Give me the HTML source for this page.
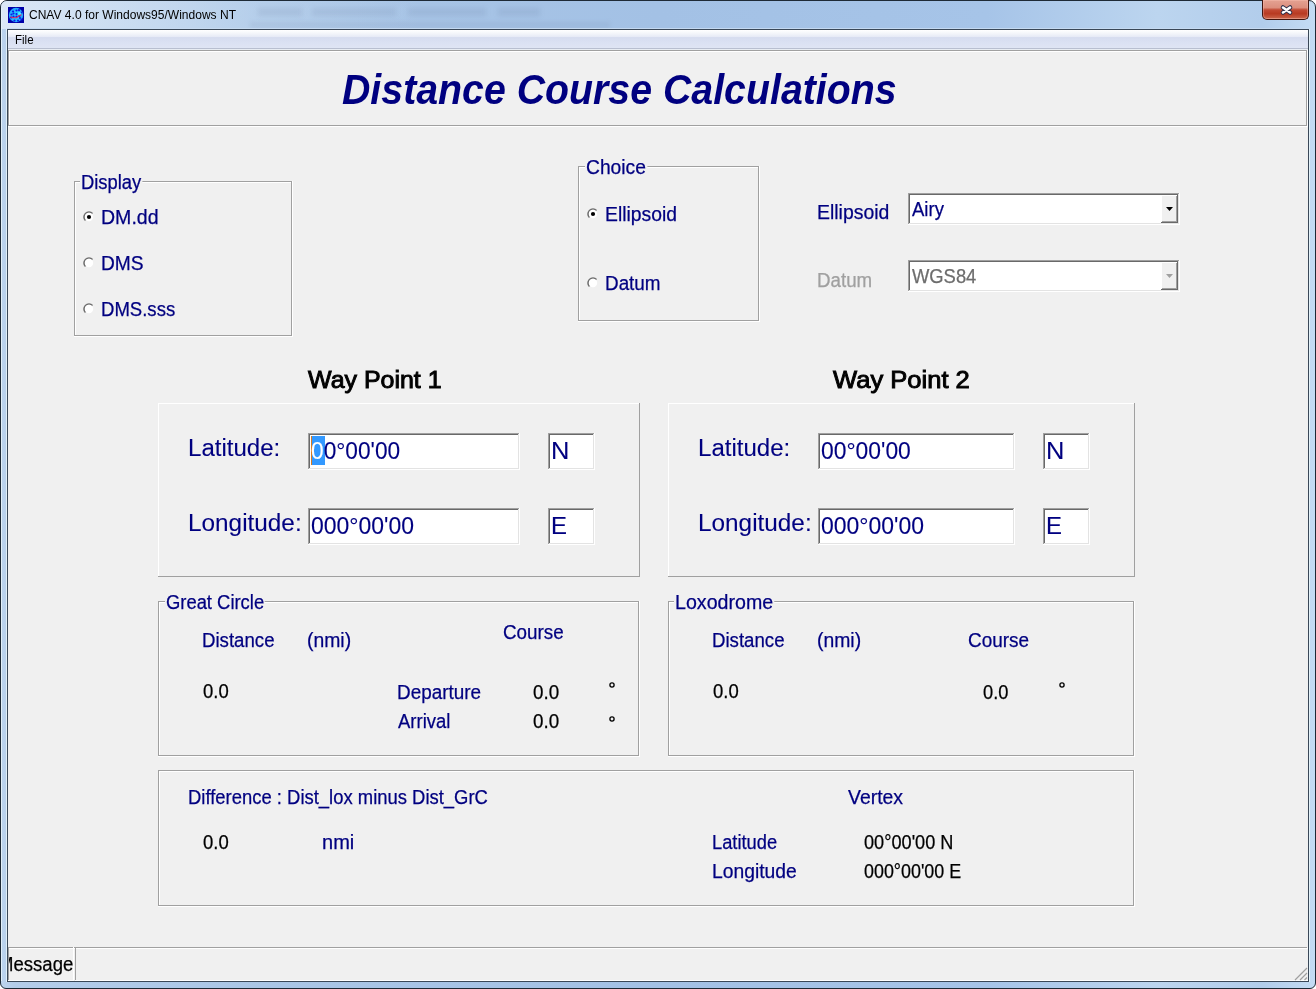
<!DOCTYPE html><html><head><meta charset="utf-8"><style>html,body{margin:0;padding:0;}body{width:1316px;height:989px;overflow:hidden;position:relative;background:#ffffff;font-family:"Liberation Sans",sans-serif;}.t{position:absolute;white-space:nowrap;}</style></head><body>
<div style="position:absolute;left:0;top:0;width:1314px;height:987px;border:1px solid #1e2a36;border-radius:7px 7px 6px 6px;background:linear-gradient(90deg,#bcd4ee 0%,#b4cdea 1%,#aac6e6 20%,#a3c1e5 50%,#a6c4e8 75%,#bcd5ef 88%,#b2cdeb 96%,#c4dcf4 100%);"></div>
<div style="position:absolute;left:1px;top:1px;width:420px;height:28px;border-radius:6px 0 0 0;background:linear-gradient(90deg,rgba(225,236,248,0.85),rgba(200,220,242,0.4) 60%,rgba(160,192,230,0));"></div>
<div style="position:absolute;left:258px;top:8px;width:44px;height:8px;background:rgba(70,95,130,0.11);filter:blur(2.5px);"></div>
<div style="position:absolute;left:312px;top:8px;width:84px;height:8px;background:rgba(70,95,130,0.11);filter:blur(2.5px);"></div>
<div style="position:absolute;left:408px;top:8px;width:78px;height:8px;background:rgba(70,95,130,0.11);filter:blur(2.5px);"></div>
<div style="position:absolute;left:498px;top:8px;width:42px;height:8px;background:rgba(70,95,130,0.11);filter:blur(2.5px);"></div>
<div style="position:absolute;left:250px;top:22px;width:360px;height:6px;background:rgba(90,110,140,0.10);filter:blur(2px);"></div>
<div style="position:absolute;left:1px;top:8px;width:1px;height:973px;background:rgba(230,243,250,0.9)"></div>
<div style="position:absolute;left:6px;top:29px;width:1px;height:953px;background:rgba(230,243,250,0.9)"></div>
<div style="position:absolute;left:1309px;top:29px;width:1px;height:953px;background:rgba(230,243,250,0.9)"></div>
<div style="position:absolute;left:7px;top:28px;width:1302px;height:1px;background:rgba(200,220,242,0.9)"></div>
<div style="position:absolute;left:7px;top:29px;width:1302px;height:953px;background:#3a4858"></div>
<div style="position:absolute;left:8px;top:30px;width:1300px;height:951px;background:#f0f0f0"></div>
<div style="position:absolute;left:8px;top:30px;width:1300px;height:18px;background:linear-gradient(180deg,#ffffff 0%,#f3f5fa 20%,#e6eaf6 38%,#d6dcef 42%,#d9e0f2 60%,#dfe5f4 100%)"></div>
<div style="position:absolute;left:8px;top:48px;width:1300px;height:1px;background:#b8bfd0"></div>
<div style="position:absolute;left:8px;top:49px;width:1300px;height:1px;background:#e8edf3"></div>
<div class="t" style="left:14.75px;top:34.29px;font-size:12.06px;line-height:12.06px;color:#000;font-weight:normal;font-style:normal;transform:scaleX(0.9545);transform-origin:0 0;">File</div>
<div class="t" style="left:29.00px;top:9.04px;font-size:12.35px;line-height:12.35px;color:#000;font-weight:normal;font-style:normal;transform:scaleX(0.9745);transform-origin:0 0;">CNAV 4.0 for Windows95/Windows NT</div>
<svg style="position:absolute;left:8px;top:7px" width="16" height="16" viewBox="0 0 16 16"><rect width="16" height="16" fill="#0000a8"/><circle cx="8" cy="8" r="7.2" fill="#22aaff"/><circle cx="8" cy="8.5" r="5.5" fill="#28c4ff" opacity="0.7"/><circle cx="5" cy="4.5" r="1.1" fill="#0a1ee6"/><circle cx="8.5" cy="3.5" r="1.1" fill="#0a1ee6"/><circle cx="11" cy="3.2" r="1.1" fill="#0a1ee6"/><circle cx="3.5" cy="7.5" r="1.1" fill="#0a1ee6"/><circle cx="5.5" cy="6.5" r="1.1" fill="#0a1ee6"/><circle cx="8.5" cy="7" r="1.1" fill="#0a1ee6"/><circle cx="5.5" cy="9.5" r="1.1" fill="#0a1ee6"/><circle cx="8.5" cy="9.5" r="1.1" fill="#0a1ee6"/><circle cx="13.5" cy="5.5" r="1.1" fill="#0a1ee6"/><circle cx="12" cy="11" r="1.1" fill="#0a1ee6"/><circle cx="13.5" cy="12.5" r="1.1" fill="#0a1ee6"/><circle cx="10" cy="13.5" r="1.1" fill="#0a1ee6"/><circle cx="6.5" cy="13.5" r="1.1" fill="#0a1ee6"/><circle cx="3.2" cy="10.5" r="1.1" fill="#0a1ee6"/><circle cx="11.5" cy="9" r="1.1" fill="#0a1ee6"/><circle cx="11.5" cy="6.5" r="1.6" fill="#40f4ff"/><path d="M2.5 9.8 L4.5 10.8 L8.5 10.8 L11 8.8 L13.5 7.8" stroke="#e8205a" stroke-width="1.1" fill="none"/></svg>
<div style="position:absolute;left:1262px;top:0px;width:45px;height:19px;border:1px solid #40140e;border-top:none;border-radius:0 0 5px 5px;box-shadow:inset 0 0 0 1px rgba(255,200,190,0.35);background:linear-gradient(180deg,#e4a292 0%,#dc8f7e 40%,#c24a34 52%,#b83a22 72%,#c65a40 92%,#d88068 100%);"></div>
<svg style="position:absolute;left:1279px;top:3px" width="15" height="14" viewBox="0 0 15 14"><path d="M4 4.5 L11 9.5 M11 4.5 L4 9.5" stroke="#30304a" stroke-width="4.6" stroke-linecap="round"/><path d="M4 4.5 L11 9.5 M11 4.5 L4 9.5" stroke="#ffffff" stroke-width="2.6" stroke-linecap="round"/></svg>
<div style="position:absolute;left:9px;top:51px;width:1299px;height:1px;background:#fff"></div>
<div style="position:absolute;left:9px;top:51px;width:1px;height:76px;background:#fff"></div>
<div style="position:absolute;left:8px;top:126px;width:1300px;height:1px;background:#fff"></div>
<div style="position:absolute;left:1307px;top:50px;width:1px;height:77px;background:#fff"></div>
<div style="position:absolute;left:8px;top:50px;width:1299px;height:1px;background:#a0a0a0"></div>
<div style="position:absolute;left:8px;top:50px;width:1px;height:76px;background:#a0a0a0"></div>
<div style="position:absolute;left:8px;top:125px;width:1299px;height:1px;background:#a0a0a0"></div>
<div style="position:absolute;left:1306px;top:50px;width:1px;height:76px;background:#a0a0a0"></div>
<div class="t" style="left:341.51px;top:69.37px;font-size:41.86px;line-height:41.86px;color:#000080;font-weight:bold;font-style:italic;transform:scaleX(0.9386);transform-origin:0 0;">Distance Course Calculations</div>
<div style="position:absolute;left:75px;top:182px;width:218px;height:1px;background:#fff"></div>
<div style="position:absolute;left:75px;top:182px;width:1px;height:155px;background:#fff"></div>
<div style="position:absolute;left:74px;top:336px;width:219px;height:1px;background:#fff"></div>
<div style="position:absolute;left:292px;top:181px;width:1px;height:156px;background:#fff"></div>
<div style="position:absolute;left:74px;top:181px;width:218px;height:1px;background:#a0a0a0"></div>
<div style="position:absolute;left:74px;top:181px;width:1px;height:155px;background:#a0a0a0"></div>
<div style="position:absolute;left:74px;top:335px;width:218px;height:1px;background:#a0a0a0"></div>
<div style="position:absolute;left:291px;top:181px;width:1px;height:155px;background:#a0a0a0"></div>
<div class="t" style="left:81.38px;top:172.67px;font-size:19.77px;line-height:19.77px;color:#000080;font-weight:normal;font-style:normal;transform:scaleX(0.9310);transform-origin:0 0;-webkit-text-stroke:0.25px #000080;background:#f0f0f0;padding:0 1px;margin-left:-1px;">Display</div>
<svg style="position:absolute;left:82px;top:210px" width="14" height="14" viewBox="0 0 14 14"><path d="M3.46 10.54 A5 5 0 0 1 10.54 3.46" stroke="#6e6e6e" stroke-width="1.6" fill="none"/><circle cx="7" cy="7" r="4.2" fill="#fff"/><circle cx="7" cy="7" r="2.1" fill="#000"/></svg>
<div class="t" style="left:100.99px;top:207.97px;font-size:19.77px;line-height:19.77px;color:#000080;font-weight:normal;font-style:normal;transform:scaleX(0.9883);transform-origin:0 0;-webkit-text-stroke:0.25px #000080;">DM.dd</div>
<svg style="position:absolute;left:82px;top:256px" width="14" height="14" viewBox="0 0 14 14"><path d="M3.46 10.54 A5 5 0 0 1 10.54 3.46" stroke="#6e6e6e" stroke-width="1.6" fill="none"/><circle cx="7" cy="7" r="4.2" fill="#fff"/></svg>
<div class="t" style="left:100.72px;top:253.97px;font-size:19.77px;line-height:19.77px;color:#000080;font-weight:normal;font-style:normal;transform:scaleX(0.9695);transform-origin:0 0;-webkit-text-stroke:0.25px #000080;">DMS</div>
<svg style="position:absolute;left:82px;top:302px" width="14" height="14" viewBox="0 0 14 14"><path d="M3.46 10.54 A5 5 0 0 1 10.54 3.46" stroke="#6e6e6e" stroke-width="1.6" fill="none"/><circle cx="7" cy="7" r="4.2" fill="#fff"/></svg>
<div class="t" style="left:100.77px;top:299.87px;font-size:19.77px;line-height:19.77px;color:#000080;font-weight:normal;font-style:normal;transform:scaleX(0.9381);transform-origin:0 0;-webkit-text-stroke:0.25px #000080;">DMS.sss</div>
<div style="position:absolute;left:579px;top:167px;width:181px;height:1px;background:#fff"></div>
<div style="position:absolute;left:579px;top:167px;width:1px;height:155px;background:#fff"></div>
<div style="position:absolute;left:578px;top:321px;width:182px;height:1px;background:#fff"></div>
<div style="position:absolute;left:759px;top:166px;width:1px;height:156px;background:#fff"></div>
<div style="position:absolute;left:578px;top:166px;width:181px;height:1px;background:#a0a0a0"></div>
<div style="position:absolute;left:578px;top:166px;width:1px;height:155px;background:#a0a0a0"></div>
<div style="position:absolute;left:578px;top:320px;width:181px;height:1px;background:#a0a0a0"></div>
<div style="position:absolute;left:758px;top:166px;width:1px;height:155px;background:#a0a0a0"></div>
<div class="t" style="left:586.04px;top:157.97px;font-size:19.77px;line-height:19.77px;color:#000080;font-weight:normal;font-style:normal;transform:scaleX(0.9749);transform-origin:0 0;-webkit-text-stroke:0.25px #000080;background:#f0f0f0;padding:0 1px;margin-left:-1px;">Choice</div>
<svg style="position:absolute;left:586px;top:207px" width="14" height="14" viewBox="0 0 14 14"><path d="M3.46 10.54 A5 5 0 0 1 10.54 3.46" stroke="#6e6e6e" stroke-width="1.6" fill="none"/><circle cx="7" cy="7" r="4.2" fill="#fff"/><circle cx="7" cy="7" r="2.1" fill="#000"/></svg>
<div class="t" style="left:605.20px;top:204.87px;font-size:19.77px;line-height:19.77px;color:#000080;font-weight:normal;font-style:normal;transform:scaleX(0.9785);transform-origin:0 0;-webkit-text-stroke:0.25px #000080;">Ellipsoid</div>
<svg style="position:absolute;left:586px;top:276px" width="14" height="14" viewBox="0 0 14 14"><path d="M3.46 10.54 A5 5 0 0 1 10.54 3.46" stroke="#6e6e6e" stroke-width="1.6" fill="none"/><circle cx="7" cy="7" r="4.2" fill="#fff"/></svg>
<div class="t" style="left:605.04px;top:273.67px;font-size:19.77px;line-height:19.77px;color:#000080;font-weight:normal;font-style:normal;transform:scaleX(0.9548);transform-origin:0 0;-webkit-text-stroke:0.25px #000080;">Datum</div>
<div class="t" style="left:817.30px;top:202.97px;font-size:19.77px;line-height:19.77px;color:#000080;font-weight:normal;font-style:normal;transform:scaleX(0.9828);transform-origin:0 0;-webkit-text-stroke:0.25px #000080;">Ellipsoid</div>
<div style="position:absolute;left:908px;top:193px;width:272px;height:32px;background:#fff"></div>
<div style="position:absolute;left:908px;top:193px;width:272px;height:1px;background:#a0a0a0"></div>
<div style="position:absolute;left:908px;top:193px;width:1px;height:32px;background:#a0a0a0"></div>
<div style="position:absolute;left:909px;top:194px;width:270px;height:1px;background:#696969"></div>
<div style="position:absolute;left:909px;top:194px;width:1px;height:30px;background:#696969"></div>
<div style="position:absolute;left:909px;top:223px;width:270px;height:1px;background:#e3e3e3"></div>
<div style="position:absolute;left:1178px;top:194px;width:1px;height:30px;background:#e3e3e3"></div>
<div style="position:absolute;left:908px;top:224px;width:272px;height:1px;background:#fff"></div>
<div style="position:absolute;left:1179px;top:193px;width:1px;height:32px;background:#fff"></div>
<div style="position:absolute;left:1161px;top:195px;width:17px;height:28px;background:#f0f0f0"></div>
<div style="position:absolute;left:1161px;top:195px;width:17px;height:1px;background:#fff"></div>
<div style="position:absolute;left:1161px;top:195px;width:1px;height:28px;background:#fff"></div>
<div style="position:absolute;left:1161px;top:222px;width:17px;height:1px;background:#696969"></div>
<div style="position:absolute;left:1177px;top:195px;width:1px;height:28px;background:#696969"></div>
<div style="position:absolute;left:1162px;top:221px;width:15px;height:1px;background:#a0a0a0"></div>
<div style="position:absolute;left:1176px;top:196px;width:1px;height:26px;background:#a0a0a0"></div>
<svg style="position:absolute;left:1166px;top:207px" width="8" height="5" viewBox="0 0 8 5"><path d="M0 0 H7 L3.5 4 Z" fill="#000"/></svg>
<div class="t" style="left:912.05px;top:200.07px;font-size:19.77px;line-height:19.77px;color:#000080;font-weight:normal;font-style:normal;transform:scaleX(0.9367);transform-origin:0 0;-webkit-text-stroke:0.25px #000080;">Airy</div>
<div class="t" style="left:817.35px;top:271.07px;font-size:19.77px;line-height:19.77px;color:#a0a0a0;font-weight:normal;font-style:normal;transform:scaleX(0.9476);transform-origin:0 0;-webkit-text-stroke:0.25px #a0a0a0;">Datum</div>
<div style="position:absolute;left:908px;top:260px;width:272px;height:32px;background:#fff"></div>
<div style="position:absolute;left:908px;top:260px;width:272px;height:1px;background:#a0a0a0"></div>
<div style="position:absolute;left:908px;top:260px;width:1px;height:32px;background:#a0a0a0"></div>
<div style="position:absolute;left:909px;top:261px;width:270px;height:1px;background:#696969"></div>
<div style="position:absolute;left:909px;top:261px;width:1px;height:30px;background:#696969"></div>
<div style="position:absolute;left:909px;top:290px;width:270px;height:1px;background:#e3e3e3"></div>
<div style="position:absolute;left:1178px;top:261px;width:1px;height:30px;background:#e3e3e3"></div>
<div style="position:absolute;left:908px;top:291px;width:272px;height:1px;background:#fff"></div>
<div style="position:absolute;left:1179px;top:260px;width:1px;height:32px;background:#fff"></div>
<div style="position:absolute;left:1161px;top:262px;width:17px;height:28px;background:#f0f0f0"></div>
<div style="position:absolute;left:1161px;top:262px;width:17px;height:1px;background:#fff"></div>
<div style="position:absolute;left:1161px;top:262px;width:1px;height:28px;background:#fff"></div>
<div style="position:absolute;left:1161px;top:289px;width:17px;height:1px;background:#696969"></div>
<div style="position:absolute;left:1177px;top:262px;width:1px;height:28px;background:#696969"></div>
<div style="position:absolute;left:1162px;top:288px;width:15px;height:1px;background:#a0a0a0"></div>
<div style="position:absolute;left:1176px;top:263px;width:1px;height:26px;background:#a0a0a0"></div>
<svg style="position:absolute;left:1166px;top:274px" width="8" height="5" viewBox="0 0 8 5"><path d="M0 0 H7 L3.5 4 Z" fill="#a0a0a0"/></svg>
<div class="t" style="left:912.01px;top:266.57px;font-size:19.77px;line-height:19.77px;color:#6d6d6d;font-weight:normal;font-style:normal;transform:scaleX(0.9293);transform-origin:0 0;-webkit-text-stroke:0.25px #6d6d6d;">WGS84</div>
<div class="t" style="left:308.18px;top:369.30px;font-size:23.04px;line-height:23.04px;color:#000;font-weight:normal;font-style:normal;transform:scaleX(1.0835);transform-origin:0 0;-webkit-text-stroke:0.9px #000;">Way Point 1</div>
<div class="t" style="left:833.17px;top:369.30px;font-size:23.04px;line-height:23.04px;color:#000;font-weight:normal;font-style:normal;transform:scaleX(1.1094);transform-origin:0 0;-webkit-text-stroke:0.9px #000;">Way Point 2</div>
<div style="position:absolute;left:158px;top:403px;width:482px;height:1px;background:#fff"></div>
<div style="position:absolute;left:158px;top:403px;width:1px;height:174px;background:#fff"></div>
<div style="position:absolute;left:158px;top:576px;width:482px;height:1px;background:#a0a0a0"></div>
<div style="position:absolute;left:639px;top:403px;width:1px;height:174px;background:#a0a0a0"></div>
<div style="position:absolute;left:668px;top:403px;width:467px;height:1px;background:#fff"></div>
<div style="position:absolute;left:668px;top:403px;width:1px;height:174px;background:#fff"></div>
<div style="position:absolute;left:668px;top:576px;width:467px;height:1px;background:#a0a0a0"></div>
<div style="position:absolute;left:1134px;top:403px;width:1px;height:174px;background:#a0a0a0"></div>
<div class="t" style="left:187.71px;top:435.93px;font-size:24.42px;line-height:24.42px;color:#000080;font-weight:normal;font-style:normal;transform:scaleX(0.9855);transform-origin:0 0;-webkit-text-stroke:0.1px #000080;">Latitude:</div>
<div class="t" style="left:187.69px;top:511.03px;font-size:24.42px;line-height:24.42px;color:#000080;font-weight:normal;font-style:normal;transform:scaleX(0.9971);transform-origin:0 0;-webkit-text-stroke:0.1px #000080;">Longitude:</div>
<div style="position:absolute;left:308px;top:433px;width:212px;height:37px;background:#fff"></div>
<div style="position:absolute;left:308px;top:433px;width:212px;height:1px;background:#a0a0a0"></div>
<div style="position:absolute;left:308px;top:433px;width:1px;height:37px;background:#a0a0a0"></div>
<div style="position:absolute;left:309px;top:434px;width:210px;height:1px;background:#696969"></div>
<div style="position:absolute;left:309px;top:434px;width:1px;height:35px;background:#696969"></div>
<div style="position:absolute;left:309px;top:468px;width:210px;height:1px;background:#e3e3e3"></div>
<div style="position:absolute;left:518px;top:434px;width:1px;height:35px;background:#e3e3e3"></div>
<div style="position:absolute;left:308px;top:469px;width:212px;height:1px;background:#fff"></div>
<div style="position:absolute;left:519px;top:433px;width:1px;height:37px;background:#fff"></div>
<div style="position:absolute;left:308px;top:508px;width:212px;height:37px;background:#fff"></div>
<div style="position:absolute;left:308px;top:508px;width:212px;height:1px;background:#a0a0a0"></div>
<div style="position:absolute;left:308px;top:508px;width:1px;height:37px;background:#a0a0a0"></div>
<div style="position:absolute;left:309px;top:509px;width:210px;height:1px;background:#696969"></div>
<div style="position:absolute;left:309px;top:509px;width:1px;height:35px;background:#696969"></div>
<div style="position:absolute;left:309px;top:543px;width:210px;height:1px;background:#e3e3e3"></div>
<div style="position:absolute;left:518px;top:509px;width:1px;height:35px;background:#e3e3e3"></div>
<div style="position:absolute;left:308px;top:544px;width:212px;height:1px;background:#fff"></div>
<div style="position:absolute;left:519px;top:508px;width:1px;height:37px;background:#fff"></div>
<div style="position:absolute;left:548px;top:433px;width:47px;height:37px;background:#fff"></div>
<div style="position:absolute;left:548px;top:433px;width:47px;height:1px;background:#a0a0a0"></div>
<div style="position:absolute;left:548px;top:433px;width:1px;height:37px;background:#a0a0a0"></div>
<div style="position:absolute;left:549px;top:434px;width:45px;height:1px;background:#696969"></div>
<div style="position:absolute;left:549px;top:434px;width:1px;height:35px;background:#696969"></div>
<div style="position:absolute;left:549px;top:468px;width:45px;height:1px;background:#e3e3e3"></div>
<div style="position:absolute;left:593px;top:434px;width:1px;height:35px;background:#e3e3e3"></div>
<div style="position:absolute;left:548px;top:469px;width:47px;height:1px;background:#fff"></div>
<div style="position:absolute;left:594px;top:433px;width:1px;height:37px;background:#fff"></div>
<div style="position:absolute;left:548px;top:508px;width:47px;height:37px;background:#fff"></div>
<div style="position:absolute;left:548px;top:508px;width:47px;height:1px;background:#a0a0a0"></div>
<div style="position:absolute;left:548px;top:508px;width:1px;height:37px;background:#a0a0a0"></div>
<div style="position:absolute;left:549px;top:509px;width:45px;height:1px;background:#696969"></div>
<div style="position:absolute;left:549px;top:509px;width:1px;height:35px;background:#696969"></div>
<div style="position:absolute;left:549px;top:543px;width:45px;height:1px;background:#e3e3e3"></div>
<div style="position:absolute;left:593px;top:509px;width:1px;height:35px;background:#e3e3e3"></div>
<div style="position:absolute;left:548px;top:544px;width:47px;height:1px;background:#fff"></div>
<div style="position:absolute;left:594px;top:508px;width:1px;height:37px;background:#fff"></div>
<div style="position:absolute;left:311px;top:436px;width:14px;height:29px;background:#3399ff"></div>
<div style="position:absolute;left:311px;top:436px;width:1px;height:29px;background:#d87a20"></div>
<div class="t" style="left:311.39px;top:438.83px;font-size:24.42px;line-height:24.42px;color:#000080;font-weight:normal;font-style:normal;transform:scaleX(0.9307);transform-origin:0 0;-webkit-text-stroke:0.1px #000080;"><span style="color:#fff;-webkit-text-stroke-color:#fff">0</span>0°00&#39;00</div>
<div class="t" style="left:310.78px;top:513.63px;font-size:24.42px;line-height:24.42px;color:#000080;font-weight:normal;font-style:normal;transform:scaleX(0.9418);transform-origin:0 0;-webkit-text-stroke:0.1px #000080;">000°00&#39;00</div>
<div class="t" style="left:551.00px;top:439.03px;font-size:24.42px;line-height:24.42px;color:#000080;font-weight:normal;font-style:normal;transform:scaleX(1.0431);transform-origin:0 0;-webkit-text-stroke:0.1px #000080;">N</div>
<div class="t" style="left:551.02px;top:514.03px;font-size:24.42px;line-height:24.42px;color:#000080;font-weight:normal;font-style:normal;transform:scaleX(0.9813);transform-origin:0 0;-webkit-text-stroke:0.1px #000080;">E</div>
<div class="t" style="left:697.71px;top:435.93px;font-size:24.42px;line-height:24.42px;color:#000080;font-weight:normal;font-style:normal;transform:scaleX(0.9855);transform-origin:0 0;-webkit-text-stroke:0.1px #000080;">Latitude:</div>
<div class="t" style="left:697.69px;top:511.03px;font-size:24.42px;line-height:24.42px;color:#000080;font-weight:normal;font-style:normal;transform:scaleX(0.9971);transform-origin:0 0;-webkit-text-stroke:0.1px #000080;">Longitude:</div>
<div style="position:absolute;left:818px;top:433px;width:197px;height:37px;background:#fff"></div>
<div style="position:absolute;left:818px;top:433px;width:197px;height:1px;background:#a0a0a0"></div>
<div style="position:absolute;left:818px;top:433px;width:1px;height:37px;background:#a0a0a0"></div>
<div style="position:absolute;left:819px;top:434px;width:195px;height:1px;background:#696969"></div>
<div style="position:absolute;left:819px;top:434px;width:1px;height:35px;background:#696969"></div>
<div style="position:absolute;left:819px;top:468px;width:195px;height:1px;background:#e3e3e3"></div>
<div style="position:absolute;left:1013px;top:434px;width:1px;height:35px;background:#e3e3e3"></div>
<div style="position:absolute;left:818px;top:469px;width:197px;height:1px;background:#fff"></div>
<div style="position:absolute;left:1014px;top:433px;width:1px;height:37px;background:#fff"></div>
<div style="position:absolute;left:818px;top:508px;width:197px;height:37px;background:#fff"></div>
<div style="position:absolute;left:818px;top:508px;width:197px;height:1px;background:#a0a0a0"></div>
<div style="position:absolute;left:818px;top:508px;width:1px;height:37px;background:#a0a0a0"></div>
<div style="position:absolute;left:819px;top:509px;width:195px;height:1px;background:#696969"></div>
<div style="position:absolute;left:819px;top:509px;width:1px;height:35px;background:#696969"></div>
<div style="position:absolute;left:819px;top:543px;width:195px;height:1px;background:#e3e3e3"></div>
<div style="position:absolute;left:1013px;top:509px;width:1px;height:35px;background:#e3e3e3"></div>
<div style="position:absolute;left:818px;top:544px;width:197px;height:1px;background:#fff"></div>
<div style="position:absolute;left:1014px;top:508px;width:1px;height:37px;background:#fff"></div>
<div style="position:absolute;left:1043px;top:433px;width:47px;height:37px;background:#fff"></div>
<div style="position:absolute;left:1043px;top:433px;width:47px;height:1px;background:#a0a0a0"></div>
<div style="position:absolute;left:1043px;top:433px;width:1px;height:37px;background:#a0a0a0"></div>
<div style="position:absolute;left:1044px;top:434px;width:45px;height:1px;background:#696969"></div>
<div style="position:absolute;left:1044px;top:434px;width:1px;height:35px;background:#696969"></div>
<div style="position:absolute;left:1044px;top:468px;width:45px;height:1px;background:#e3e3e3"></div>
<div style="position:absolute;left:1088px;top:434px;width:1px;height:35px;background:#e3e3e3"></div>
<div style="position:absolute;left:1043px;top:469px;width:47px;height:1px;background:#fff"></div>
<div style="position:absolute;left:1089px;top:433px;width:1px;height:37px;background:#fff"></div>
<div style="position:absolute;left:1043px;top:508px;width:47px;height:37px;background:#fff"></div>
<div style="position:absolute;left:1043px;top:508px;width:47px;height:1px;background:#a0a0a0"></div>
<div style="position:absolute;left:1043px;top:508px;width:1px;height:37px;background:#a0a0a0"></div>
<div style="position:absolute;left:1044px;top:509px;width:45px;height:1px;background:#696969"></div>
<div style="position:absolute;left:1044px;top:509px;width:1px;height:35px;background:#696969"></div>
<div style="position:absolute;left:1044px;top:543px;width:45px;height:1px;background:#e3e3e3"></div>
<div style="position:absolute;left:1088px;top:509px;width:1px;height:35px;background:#e3e3e3"></div>
<div style="position:absolute;left:1043px;top:544px;width:47px;height:1px;background:#fff"></div>
<div style="position:absolute;left:1089px;top:508px;width:1px;height:37px;background:#fff"></div>
<div class="t" style="left:820.78px;top:438.83px;font-size:24.42px;line-height:24.42px;color:#000080;font-weight:normal;font-style:normal;transform:scaleX(0.9371);transform-origin:0 0;-webkit-text-stroke:0.1px #000080;">00°00&#39;00</div>
<div class="t" style="left:820.78px;top:513.63px;font-size:24.42px;line-height:24.42px;color:#000080;font-weight:normal;font-style:normal;transform:scaleX(0.9418);transform-origin:0 0;-webkit-text-stroke:0.1px #000080;">000°00&#39;00</div>
<div class="t" style="left:1046.00px;top:439.03px;font-size:24.42px;line-height:24.42px;color:#000080;font-weight:normal;font-style:normal;transform:scaleX(1.0431);transform-origin:0 0;-webkit-text-stroke:0.1px #000080;">N</div>
<div class="t" style="left:1046.02px;top:514.03px;font-size:24.42px;line-height:24.42px;color:#000080;font-weight:normal;font-style:normal;transform:scaleX(0.9813);transform-origin:0 0;-webkit-text-stroke:0.1px #000080;">E</div>
<div style="position:absolute;left:159px;top:602px;width:481px;height:1px;background:#fff"></div>
<div style="position:absolute;left:159px;top:602px;width:1px;height:155px;background:#fff"></div>
<div style="position:absolute;left:158px;top:756px;width:482px;height:1px;background:#fff"></div>
<div style="position:absolute;left:639px;top:601px;width:1px;height:156px;background:#fff"></div>
<div style="position:absolute;left:158px;top:601px;width:481px;height:1px;background:#a0a0a0"></div>
<div style="position:absolute;left:158px;top:601px;width:1px;height:155px;background:#a0a0a0"></div>
<div style="position:absolute;left:158px;top:755px;width:481px;height:1px;background:#a0a0a0"></div>
<div style="position:absolute;left:638px;top:601px;width:1px;height:155px;background:#a0a0a0"></div>
<div class="t" style="left:165.88px;top:592.57px;font-size:19.77px;line-height:19.77px;color:#000080;font-weight:normal;font-style:normal;transform:scaleX(0.9316);transform-origin:0 0;-webkit-text-stroke:0.25px #000080;background:#f0f0f0;padding:0 1px;margin-left:-1px;">Great Circle</div>
<div class="t" style="left:202.26px;top:630.57px;font-size:19.77px;line-height:19.77px;color:#000080;font-weight:normal;font-style:normal;transform:scaleX(0.9432);transform-origin:0 0;-webkit-text-stroke:0.25px #000080;">Distance</div>
<div class="t" style="left:307.39px;top:630.57px;font-size:19.77px;line-height:19.77px;color:#000080;font-weight:normal;font-style:normal;transform:scaleX(0.9800);transform-origin:0 0;-webkit-text-stroke:0.25px #000080;">(nmi)</div>
<div class="t" style="left:503.06px;top:622.77px;font-size:19.77px;line-height:19.77px;color:#000080;font-weight:normal;font-style:normal;transform:scaleX(0.9520);transform-origin:0 0;-webkit-text-stroke:0.25px #000080;">Course</div>
<div class="t" style="left:203.06px;top:682.27px;font-size:19.77px;line-height:19.77px;color:#000;font-weight:normal;font-style:normal;transform:scaleX(0.9366);transform-origin:0 0;-webkit-text-stroke:0.25px #000;">0.0</div>
<div class="t" style="left:396.64px;top:682.57px;font-size:19.77px;line-height:19.77px;color:#000080;font-weight:normal;font-style:normal;transform:scaleX(0.9567);transform-origin:0 0;-webkit-text-stroke:0.25px #000080;">Departure</div>
<div class="t" style="left:532.75px;top:682.57px;font-size:19.77px;line-height:19.77px;color:#000;font-weight:normal;font-style:normal;transform:scaleX(0.9520);transform-origin:0 0;-webkit-text-stroke:0.25px #000;">0.0</div>
<svg style="position:absolute;left:608px;top:681px" width="8" height="8" viewBox="0 0 8 8"><circle cx="4" cy="4" r="2.1" fill="none" stroke="#000" stroke-width="1.3"/></svg>
<div class="t" style="left:398.15px;top:712.47px;font-size:19.77px;line-height:19.77px;color:#000080;font-weight:normal;font-style:normal;transform:scaleX(0.9349);transform-origin:0 0;-webkit-text-stroke:0.25px #000080;">Arrival</div>
<div class="t" style="left:532.75px;top:712.47px;font-size:19.77px;line-height:19.77px;color:#000;font-weight:normal;font-style:normal;transform:scaleX(0.9520);transform-origin:0 0;-webkit-text-stroke:0.25px #000;">0.0</div>
<svg style="position:absolute;left:608px;top:715px" width="8" height="8" viewBox="0 0 8 8"><circle cx="4" cy="4" r="2.1" fill="none" stroke="#000" stroke-width="1.3"/></svg>
<div style="position:absolute;left:669px;top:602px;width:466px;height:1px;background:#fff"></div>
<div style="position:absolute;left:669px;top:602px;width:1px;height:155px;background:#fff"></div>
<div style="position:absolute;left:668px;top:756px;width:467px;height:1px;background:#fff"></div>
<div style="position:absolute;left:1134px;top:601px;width:1px;height:156px;background:#fff"></div>
<div style="position:absolute;left:668px;top:601px;width:466px;height:1px;background:#a0a0a0"></div>
<div style="position:absolute;left:668px;top:601px;width:1px;height:155px;background:#a0a0a0"></div>
<div style="position:absolute;left:668px;top:755px;width:466px;height:1px;background:#a0a0a0"></div>
<div style="position:absolute;left:1133px;top:601px;width:1px;height:155px;background:#a0a0a0"></div>
<div class="t" style="left:674.78px;top:592.57px;font-size:19.77px;line-height:19.77px;color:#000080;font-weight:normal;font-style:normal;transform:scaleX(0.9926);transform-origin:0 0;-webkit-text-stroke:0.25px #000080;background:#f0f0f0;padding:0 1px;margin-left:-1px;">Loxodrome</div>
<div class="t" style="left:712.26px;top:630.57px;font-size:19.77px;line-height:19.77px;color:#000080;font-weight:normal;font-style:normal;transform:scaleX(0.9432);transform-origin:0 0;-webkit-text-stroke:0.25px #000080;">Distance</div>
<div class="t" style="left:817.39px;top:630.57px;font-size:19.77px;line-height:19.77px;color:#000080;font-weight:normal;font-style:normal;transform:scaleX(0.9800);transform-origin:0 0;-webkit-text-stroke:0.25px #000080;">(nmi)</div>
<div class="t" style="left:967.85px;top:630.77px;font-size:19.77px;line-height:19.77px;color:#000080;font-weight:normal;font-style:normal;transform:scaleX(0.9584);transform-origin:0 0;-webkit-text-stroke:0.25px #000080;">Course</div>
<div class="t" style="left:713.06px;top:682.27px;font-size:19.77px;line-height:19.77px;color:#000;font-weight:normal;font-style:normal;transform:scaleX(0.9366);transform-origin:0 0;-webkit-text-stroke:0.25px #000;">0.0</div>
<div class="t" style="left:983.37px;top:682.67px;font-size:19.77px;line-height:19.77px;color:#000;font-weight:normal;font-style:normal;transform:scaleX(0.9250);transform-origin:0 0;-webkit-text-stroke:0.25px #000;">0.0</div>
<svg style="position:absolute;left:1058px;top:681px" width="8" height="8" viewBox="0 0 8 8"><circle cx="4" cy="4" r="2.1" fill="none" stroke="#000" stroke-width="1.3"/></svg>
<div style="position:absolute;left:159px;top:771px;width:976px;height:1px;background:#fff"></div>
<div style="position:absolute;left:159px;top:771px;width:1px;height:136px;background:#fff"></div>
<div style="position:absolute;left:158px;top:906px;width:977px;height:1px;background:#fff"></div>
<div style="position:absolute;left:1134px;top:770px;width:1px;height:137px;background:#fff"></div>
<div style="position:absolute;left:158px;top:770px;width:976px;height:1px;background:#a0a0a0"></div>
<div style="position:absolute;left:158px;top:770px;width:1px;height:136px;background:#a0a0a0"></div>
<div style="position:absolute;left:158px;top:905px;width:976px;height:1px;background:#a0a0a0"></div>
<div style="position:absolute;left:1133px;top:770px;width:1px;height:136px;background:#a0a0a0"></div>
<div class="t" style="left:187.68px;top:787.87px;font-size:19.77px;line-height:19.77px;color:#000080;font-weight:normal;font-style:normal;transform:scaleX(0.9329);transform-origin:0 0;-webkit-text-stroke:0.25px #000080;">Difference : Dist_lox minus Dist_GrC</div>
<div class="t" style="left:203.06px;top:832.67px;font-size:19.77px;line-height:19.77px;color:#000;font-weight:normal;font-style:normal;transform:scaleX(0.9366);transform-origin:0 0;-webkit-text-stroke:0.25px #000;">0.0</div>
<div class="t" style="left:322.15px;top:832.67px;font-size:19.77px;line-height:19.77px;color:#000080;font-weight:normal;font-style:normal;transform:scaleX(1.0135);transform-origin:0 0;-webkit-text-stroke:0.25px #000080;">nmi</div>
<div class="t" style="left:848.40px;top:787.87px;font-size:19.77px;line-height:19.77px;color:#000080;font-weight:normal;font-style:normal;transform:scaleX(0.9821);transform-origin:0 0;-webkit-text-stroke:0.25px #000080;">Vertex</div>
<div class="t" style="left:712.29px;top:832.57px;font-size:19.77px;line-height:19.77px;color:#000080;font-weight:normal;font-style:normal;transform:scaleX(0.9255);transform-origin:0 0;-webkit-text-stroke:0.25px #000080;">Latitude</div>
<div class="t" style="left:863.57px;top:832.57px;font-size:19.77px;line-height:19.77px;color:#000;font-weight:normal;font-style:normal;transform:scaleX(0.9181);transform-origin:0 0;-webkit-text-stroke:0.25px #000;">00°00&#39;00 N</div>
<div class="t" style="left:712.21px;top:862.37px;font-size:19.77px;line-height:19.77px;color:#000080;font-weight:normal;font-style:normal;transform:scaleX(0.9768);transform-origin:0 0;-webkit-text-stroke:0.25px #000080;">Longitude</div>
<div class="t" style="left:863.58px;top:862.37px;font-size:19.77px;line-height:19.77px;color:#000;font-weight:normal;font-style:normal;transform:scaleX(0.9053);transform-origin:0 0;-webkit-text-stroke:0.25px #000;">000°00&#39;00 E</div>
<div style="position:absolute;left:8px;top:947px;width:1299px;height:1px;background:#a0a0a0"></div>
<div style="position:absolute;left:8px;top:948px;width:1300px;height:1px;background:#fff"></div>
<div style="position:absolute;left:8px;top:947px;width:1px;height:34px;background:#a0a0a0"></div>
<div style="position:absolute;left:8px;top:980px;width:66px;height:1px;background:#fff"></div>
<div style="position:absolute;left:73px;top:947px;width:1px;height:34px;background:#fff"></div>
<div style="position:absolute;left:75px;top:947px;width:1px;height:34px;background:#a0a0a0"></div>
<div style="position:absolute;left:75px;top:980px;width:1233px;height:1px;background:#fff"></div>
<div style="position:absolute;left:9px;top:949px;width:64px;height:31px;overflow:hidden;">
<div class="t" style="left:-11.24px;top:5.77px;font-size:19.77px;line-height:19.77px;color:#000;font-weight:normal;font-style:normal;transform:scaleX(0.9384);transform-origin:0 0;-webkit-text-stroke:0.25px #000;">Message</div>
</div>
<svg style="position:absolute;left:1292px;top:965px" width="16" height="16" viewBox="0 0 16 16"><path d="M3 15 L15 3 M8 15 L15 8 M12.5 15 L15 12.5" stroke="#a0a0a0" stroke-width="1.2"/></svg>
</body></html>
